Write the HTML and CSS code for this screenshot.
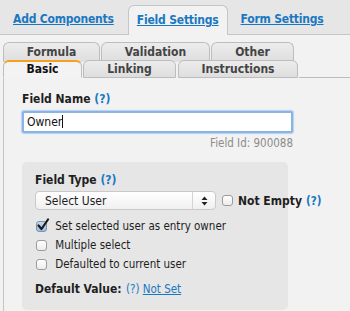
FILE: index.html
```html
<!DOCTYPE html>
<html lang="en">

<head>
    <meta charset="UTF-8">
    <title>Field Settings</title>
    <link rel="stylesheet" href="styles.css">
</head>

<body>
    <div class="topbar">
        <a class="top-link first" href="#">Add Components</a>
        <div class="top-tab active"><a href="#">Field Settings</a></div>
        <a class="top-link" href="#">Form Settings</a>
    </div>

    <div class="subtabs">
        <div class="tab-row back">
            <div class="tab w-formula">Formula</div>
            <div class="tab w-validation">Validation</div>
            <div class="tab w-other">Other</div>
        </div>
        <div class="tab-row front">
            <div class="tab w-basic current">Basic</div>
            <div class="tab w-linking">Linking</div>
            <div class="tab w-instructions">Instructions</div>
            <div class="tab-rest"></div>
        </div>
    </div>

    <div class="panel">
        <div class="label">Field Name <a class="help" href="#">(?)</a></div>
        <div class="text-input">Owner<span class="caret"></span></div>
        <div class="field-id">Field Id: 900088</div>

        <div class="box">
            <div class="label">Field Type <a class="help" href="#">(?)</a></div>
            <div class="type-row">
                <div class="select">
                    <span>Select User</span>
                    <span class="arrows">
                        <svg width="7" height="10" viewBox="0 0 7 10">
                            <path d="M3.5 0.5 L6.5 4 L0.5 4 Z" fill="#222" />
                            <path d="M3.5 9.5 L6.5 6 L0.5 6 Z" fill="#222" />
                        </svg>
                    </span>
                </div>
                <span class="check"></span>
                <span class="strong">Not Empty</span>
                <a class="help" href="#">(?)</a>
            </div>
            <div class="opt first">
                <span class="check on">
                    <svg width="14" height="14" viewBox="0 0 14 14">
                        <path d="M2.5 7.5 L5.5 11 L12 1.5" fill="none" stroke="#1b1b1b" stroke-width="2.2"
                            stroke-linecap="round" stroke-linejoin="round" />
                    </svg>
                </span>
                Set selected user as entry owner
            </div>
            <div class="opt"><span class="check"></span> Multiple select</div>
            <div class="opt"><span class="check"></span> Defaulted to current user</div>
            <div class="default">
                <span class="strong">Default Value:</span>
                <a class="help plain" href="#">(?)</a>
                <a class="link" href="#">Not Set</a>
            </div>
        </div>
    </div>
</body>

</html>
```

FILE: styles.css
```css
body {
    margin: 0;
    padding: 0;
    background: #f2f2f2;
    font-family: "DejaVu Sans Condensed", "DejaVu Sans", Verdana, sans-serif;
    font-size: 11.5px;
    color: #1e1e1e;
    height: 311px;
    overflow: hidden;
}

a {
    color: #1a78c2;
}

.topbar {
    height: 35px;
    background: #e6e6e6;
    border-bottom: 1px solid #c6c6c6;
    display: flex;
    align-items: flex-end;
    box-sizing: border-box;
    white-space: nowrap;
}

.top-link {
    font-weight: bold;
    font-size: 12px;
    letter-spacing: -0.2px;
    margin-bottom: 8px;
}

.top-link.first {
    margin-left: 13px;
    margin-right: 14px;
}

.top-tab {
    height: 30px;
    margin-bottom: -1px;
    padding: 0 8px;
    background: #f2f2f2;
    border: 1px solid #c6c6c6;
    border-bottom: none;
    border-radius: 6px 6px 0 0;
    display: flex;
    align-items: flex-end;
    box-sizing: border-box;
    margin-right: 13px;
}

.top-tab a {
    font-weight: bold;
    font-size: 12px;
    letter-spacing: -0.2px;
    margin-bottom: 8px;
}

.subtabs {
    padding-top: 7px;
}

.tab-row {
    display: flex;
    padding-left: 3px;
}

.tab-row.front {
    margin-top: -2px;
}

.tab {
    height: 20px;
    box-sizing: border-box;
    border: 1px solid #bdbdbd;
    border-bottom: none;
    border-radius: 6px 6px 0 0;
    background: linear-gradient(#ececec, #dedede);
    text-align: center;
    font-weight: bold;
    font-size: 12px;
    color: #444;
    padding-top: 2px;
    margin-right: 1px;
    flex-shrink: 0;
}

.tab-row.front .tab {
    height: 18px;
    padding-top: 1px;
    border-bottom: 1px solid #bdbdbd;
}

.tab-row.front .tab.current {
    background: #f3f3f3;
    border-top: 2px solid #f5a020;
    border-bottom-color: #f3f3f3;
    color: #111;
    padding-top: 0;
}

.tab-rest {
    flex: 1;
    border-bottom: 1px solid #bdbdbd;
}

.w-formula { width: 97px; }
.w-validation { width: 109px; }
.w-other { width: 83px; }
.w-basic { width: 79px; }
.w-linking { width: 93px; }
.w-instructions { width: 120px; margin-left: 1px; }

.panel {
    margin-left: 3px;
    border-left: 1px solid #c4c4c4;
    padding: 14px 0 0 18px;
    height: 219px;
}

.label {
    font-weight: bold;
    font-size: 12px;
    height: 19px;
}

.help {
    text-decoration: none;
    font-weight: bold;
}

.text-input {
    width: 271px;
    height: 22px;
    box-sizing: border-box;
    background: #fff;
    border: 2px solid #8ab4e6;
    box-shadow: 0 0 1px 1px #b7d2f2;
    border-radius: 2px;
    font-size: 12px;
    padding: 2px 0 0 3px;
    color: #111;
}

.caret {
    display: inline-block;
    width: 1px;
    height: 13px;
    background: #111;
    vertical-align: -2px;
}

.field-id {
    width: 271px;
    text-align: right;
    color: #8c8c8c;
    font-size: 11.5px;
    margin-top: 3px;
}

.box {
    margin-top: 12px;
    width: 266px;
    height: 148px;
    box-sizing: border-box;
    background: #e6e6e6;
    border-radius: 5px;
    padding: 11px 0 0 13px;
    white-space: nowrap;
}

.box .label {
    height: 17px;
}

.type-row {
    display: flex;
    align-items: center;
    margin-top: 1px;
    height: 19px;
}

.select {
    width: 181px;
    height: 19px;
    flex-shrink: 0;
    box-sizing: border-box;
    border: 1px solid #c9c9c9;
    border-radius: 4px;
    background: linear-gradient(#ffffff, #f0f0f0);
    display: flex;
    align-items: center;
    justify-content: space-between;
    padding-left: 9px;
    font-size: 12px;
    margin-right: 6px;
}

.arrows {
    width: 22px;
    height: 17px;
    border-left: 1px solid #d4d4d4;
    display: flex;
    align-items: center;
    justify-content: center;
}

.check {
    display: inline-block;
    flex-shrink: 0;
    width: 11px;
    height: 11px;
    box-sizing: border-box;
    border: 1px solid #9c9c9c;
    border-radius: 3px;
    background: linear-gradient(#ffffff, #ececec);
    margin-right: 5px;
    position: relative;
    vertical-align: -2px;
}

.check.on {
    background: linear-gradient(#c4d8ee, #9fbde2);
    border-color: #7b93b3;
}

.check.on svg {
    position: absolute;
    left: -1px;
    top: -4px;
}

.strong {
    font-weight: bold;
    font-size: 12px;
    margin-right: 4px;
}

.opt {
    margin-top: 4px;
    height: 15px;
    padding-left: 1px;
}

.opt.first {
    margin-top: 9px;
}

.default {
    margin-top: 10px;
}

.default .strong {
    margin-right: 1px;
}

.default .help {
    font-weight: normal;
}
```
